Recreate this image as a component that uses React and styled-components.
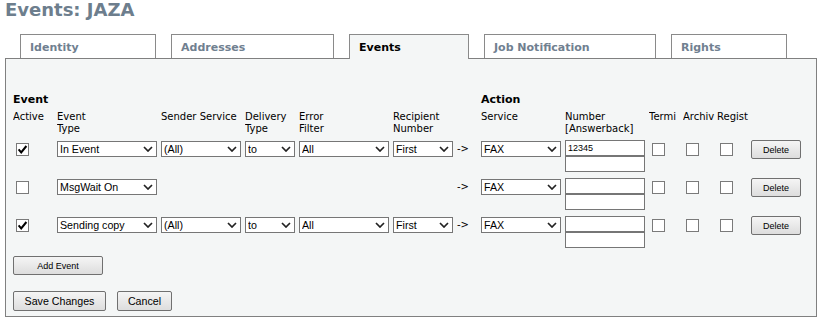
import React from 'react';
import styled, { createGlobalStyle } from 'styled-components';

const GlobalStyle = createGlobalStyle`
  html, body {
    margin: 0;
    padding: 0;
    background: #fff;
  }
  body {
    font-family: "DejaVu Sans", Verdana, sans-serif;
    color: #000;
  }
`;

// column widths shared by every row of the events table
const COLUMNS = '44px 104px 84px 54px 94px 64px 24px 84px 84px 34px 34px 34px auto';

const Page = styled.div`
  padding-left: 5px;
  width: 812px;
`;

const Title = styled.h1`
  margin: 0;
  font-size: 18px;
  line-height: 20px;
  font-weight: bold;
  color: #6d7e8d;
`;

const TabStrip = styled.div`
  display: flex;
  align-items: flex-start;
  gap: 15px;
  height: 24px;
  margin-top: 14px;
  padding-left: 15px;
`;

const Tab = styled.div`
  box-sizing: border-box;
  position: relative;
  z-index: ${({ $active }) => ($active ? 1 : 0)};
  width: ${({ $w }) => $w}px;
  height: ${({ $active }) => ($active ? 25 : 24)}px;
  margin-bottom: ${({ $active }) => ($active ? -1 : 0)}px;
  padding: 6px 0 0 9px;
  border: 1px solid #8a8a8a;
  border-bottom: none;
  background: ${({ $active }) => ($active ? '#f4f6f6' : '#fff')};
  font-size: 11px;
  line-height: 13px;
  font-weight: bold;
  color: ${({ $active }) => ($active ? '#000' : '#708090')};
  white-space: nowrap;
`;

const Panel = styled.div`
  box-sizing: border-box;
  width: 812px;
  padding: 34px 7px 5px;
  border: 1px solid #808080;
  background: #f4f6f6;
`;

const Grid = styled.div`
  display: grid;
  grid-template-columns: ${COLUMNS};
  align-items: start;
`;

const SectionRow = styled(Grid)`
  font-size: 11px;
  line-height: 13px;
  font-weight: bold;
`;

const SectionLabel = styled.div`
  grid-column: ${({ $col }) => $col} / span ${({ $span }) => $span};
`;

const HeaderRow = styled(Grid)`
  margin-top: 5px;
  font-size: 10px;
  line-height: 12px;
`;

const HeaderCell = styled.div`
  white-space: nowrap;
  overflow: hidden;
`;

const DataRow = styled(Grid)`
  height: 32px;
  margin-top: ${({ $first }) => ($first ? 5 : 6)}px;
`;

const Box = styled.span`
  display: block;
  box-sizing: border-box;
  width: 13px;
  height: 13px;
  margin: 3px 0 0 3px;
  border: 1px solid #7a7a7a;
  background: #fff;

  svg {
    display: block;
  }
`;

const SelectWrap = styled.div`
  position: relative;
  width: ${({ $w }) => $w}px;
  height: 16px;
  margin-top: 1px;

  svg {
    position: absolute;
    top: 5px;
    right: 4px;
    pointer-events: none;
  }
`;

const SelectField = styled.select`
  appearance: none;
  display: block;
  box-sizing: border-box;
  width: 100%;
  height: 100%;
  margin: 0;
  padding: 0 0 0 2px;
  border: 1px solid #767676;
  border-radius: 0;
  background: #fff;
  font-family: "Liberation Sans", Arial, sans-serif;
  font-size: 8pt;
  color: #000;
  outline: none;
`;

const Arrow = styled.span`
  display: block;
  font-size: 10px;
  line-height: 17px;
`;

const Stack = styled.div`
  display: flex;
  flex-direction: column;
`;

const TextInput = styled.input`
  display: block;
  box-sizing: border-box;
  width: 80px;
  height: 16px;
  margin: 0;
  padding: 0 2px;
  border: 1px solid #767676;
  border-radius: 0;
  background: #fff;
  font-family: "Liberation Sans", Arial, sans-serif;
  font-size: 9px;
  color: #000;
  outline: none;
`;

const Button = styled.button`
  display: block;
  box-sizing: border-box;
  width: ${({ $w }) => $w}px;
  height: ${({ $h }) => $h}px;
  margin: 0;
  padding: 0;
  border: 1px solid #707070;
  border-radius: 2px;
  background: linear-gradient(#f5f5f5, #dddddd);
  font-family: "Liberation Sans", Arial, sans-serif;
  font-size: ${({ $fs }) => $fs};
  color: #000;
`;

const AddRow = styled.div`
  margin-top: 8px;
`;

const Actions = styled.div`
  display: flex;
  gap: 11px;
  margin-top: 16px;
`;

const Chevron = () => (
  <svg width="10" height="6" viewBox="0 0 10 6">
    <path d="M1 1 L5 5 L9 1" fill="none" stroke="#222" strokeWidth="1.7" />
  </svg>
);

const CheckBox = ({ checked }) => (
  <Box>
    {checked && (
      <svg width="11" height="11" viewBox="0 0 11 11">
        <path d="M1.6 5.4 L4.2 8.4 L9.4 2" fill="none" stroke="#000" strokeWidth="2" />
      </svg>
    )}
  </Box>
);

const Select = ({ w, value }) => (
  <SelectWrap $w={w}>
    <SelectField defaultValue={value}>
      <option>{value}</option>
    </SelectField>
    <Chevron />
  </SelectWrap>
);

const tabs = [
  { label: 'Identity', w: 136 },
  { label: 'Addresses', w: 163 },
  { label: 'Events', w: 120, active: true },
  { label: 'Job Notification', w: 172 },
  { label: 'Rights', w: 116 },
];

const headers = [
  ['Active'],
  ['Event', 'Type'],
  ['Sender Service'],
  ['Delivery', 'Type'],
  ['Error', 'Filter'],
  ['Recipient', 'Number'],
  [],
  ['Service'],
  ['Number', '[Answerback]'],
  ['Termi'],
  ['Archiv'],
  ['Regist'],
];

const events = [
  { active: true, type: 'In Event', full: true, number: '12345' },
  { active: false, type: 'MsgWait On', full: false, number: '' },
  { active: true, type: 'Sending copy', full: true, number: '' },
];

const App = () => (
  <Page>
    <GlobalStyle />
    <Title>Events: JAZA</Title>
    <TabStrip>
      {tabs.map((t) => (
        <Tab key={t.label} $w={t.w} $active={t.active}>
          {t.label}
        </Tab>
      ))}
    </TabStrip>
    <Panel>
      <SectionRow>
        <SectionLabel $col={1} $span={7}>Event</SectionLabel>
        <SectionLabel $col={8} $span={6}>Action</SectionLabel>
      </SectionRow>
      <HeaderRow>
        {headers.map((lines, i) => (
          <HeaderCell key={i}>
            {lines.map((l, j) => (
              <React.Fragment key={j}>
                {j > 0 && <br />}
                {l}
              </React.Fragment>
            ))}
          </HeaderCell>
        ))}
      </HeaderRow>
      {events.map((ev, i) => (
        <DataRow key={i} $first={i === 0}>
          <CheckBox checked={ev.active} />
          <Select w={100} value={ev.type} />
          {ev.full ? <Select w={80} value="(All)" /> : <div />}
          {ev.full ? <Select w={50} value="to" /> : <div />}
          {ev.full ? <Select w={90} value="All" /> : <div />}
          {ev.full ? <Select w={60} value="First" /> : <div />}
          <Arrow>-&gt;</Arrow>
          <Select w={80} value="FAX" />
          <Stack>
            <TextInput defaultValue={ev.number} />
            <TextInput defaultValue="" />
          </Stack>
          <CheckBox />
          <CheckBox />
          <CheckBox />
          <Button $w={50} $h={19} $fs="9px">Delete</Button>
        </DataRow>
      ))}
      <AddRow>
        <Button $w={90} $h={19} $fs="9px">Add Event</Button>
      </AddRow>
      <Actions>
        <Button $w={93} $h={20} $fs="8pt">Save Changes</Button>
        <Button $w={55} $h={20} $fs="8pt">Cancel</Button>
      </Actions>
    </Panel>
  </Page>
);

export default App;
